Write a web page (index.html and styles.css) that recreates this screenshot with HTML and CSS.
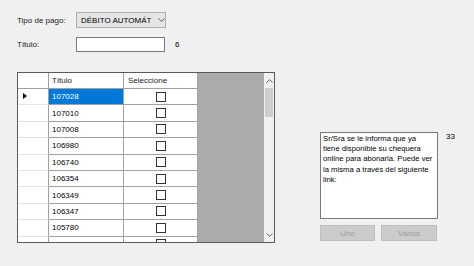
FILE: index.html
```html
<!DOCTYPE html>
<html lang="es">
<head>
<meta charset="utf-8">
<link rel="stylesheet" href="styles.css">
</head>
<body>
<div class="form">
  <div class="row row-tipo">
    <span class="label">Tipo de pago:</span>
    <div class="combo">
      <span class="combo-text">DÉBITO AUTOMÁT</span>
      <svg class="combo-arrow" width="7" height="4" viewBox="0 0 7 4"><path d="M0.5 0.5 L3.5 3.3 L6.5 0.5" fill="none" stroke="#606060" stroke-width="1"/></svg>
    </div>
  </div>
  <div class="row row-titulo">
    <span class="label">Título:</span>
    <div class="textbox"></div>
    <span class="count">6</span>
  </div>
  <div class="main">
    <div class="dgv">
      <div class="dgv-body">
        <div class="dgv-table">
          <div class="dgv-row dgv-header">
            <div class="cell rh"></div>
            <div class="cell c-titulo">Título</div>
            <div class="cell c-sel">Seleccione</div>
          </div>
          <div class="dgv-row">
            <div class="cell rh"><span class="current"></span></div>
            <div class="cell c-titulo selected">107028</div>
            <div class="cell c-sel"><span class="chk"></span></div>
          </div>
          <div class="dgv-row">
            <div class="cell rh"></div>
            <div class="cell c-titulo">107010</div>
            <div class="cell c-sel"><span class="chk"></span></div>
          </div>
          <div class="dgv-row">
            <div class="cell rh"></div>
            <div class="cell c-titulo">107008</div>
            <div class="cell c-sel"><span class="chk"></span></div>
          </div>
          <div class="dgv-row">
            <div class="cell rh"></div>
            <div class="cell c-titulo">106980</div>
            <div class="cell c-sel"><span class="chk"></span></div>
          </div>
          <div class="dgv-row">
            <div class="cell rh"></div>
            <div class="cell c-titulo">106740</div>
            <div class="cell c-sel"><span class="chk"></span></div>
          </div>
          <div class="dgv-row">
            <div class="cell rh"></div>
            <div class="cell c-titulo">106354</div>
            <div class="cell c-sel"><span class="chk"></span></div>
          </div>
          <div class="dgv-row">
            <div class="cell rh"></div>
            <div class="cell c-titulo">106349</div>
            <div class="cell c-sel"><span class="chk"></span></div>
          </div>
          <div class="dgv-row">
            <div class="cell rh"></div>
            <div class="cell c-titulo">106347</div>
            <div class="cell c-sel"><span class="chk"></span></div>
          </div>
          <div class="dgv-row">
            <div class="cell rh"></div>
            <div class="cell c-titulo">105780</div>
            <div class="cell c-sel"><span class="chk"></span></div>
          </div>
          <div class="dgv-row">
            <div class="cell rh"></div>
            <div class="cell c-titulo">105433</div>
            <div class="cell c-sel"><span class="chk"></span></div>
          </div>
        </div>
        <div class="dgv-empty"></div>
      </div>
      <div class="vscroll">
        <svg class="sarrow" width="7" height="4" viewBox="0 0 7 4"><path d="M0.5 3.5 L3.5 0.7 L6.5 3.5" fill="none" stroke="#606060" stroke-width="1"/></svg>
        <div class="track"><div class="thumb"></div></div>
        <svg class="sarrow" width="7" height="4" viewBox="0 0 7 4"><path d="M0.5 0.5 L3.5 3.3 L6.5 0.5" fill="none" stroke="#606060" stroke-width="1"/></svg>
      </div>
    </div>
    <div class="side">
      <div class="side-top">
        <div class="memo">
          <span class="memo-line">Sr/Sra se le informa que ya</span>
          <span class="memo-line">tiene disponible su chequera</span>
          <span class="memo-line">online para abonarla. Puede ver</span>
          <span class="memo-line">la misma a través del siguiente</span>
          <span class="memo-line">link:</span>
        </div>
        <span class="memo-count">33</span>
      </div>
      <div class="buttons">
        <div class="btn btn-uno">Uno</div>
        <div class="btn btn-varios">Varios</div>
      </div>
    </div>
  </div>
</div>
</body>
</html>
```
FILE: styles.css
```css
html, body {
  margin: 0;
  padding: 0;
  background: #f0f0f0;
}
body {
  font-family: "Liberation Sans", Arial, sans-serif;
  font-size: 8px;
  color: #000;
  width: 474px;
  height: 266px;
  overflow: hidden;
}
.form {
  padding: 12px 0 0 17px;
}
.row {
  display: flex;
  align-items: center;
}
.label {
  width: 59px;
  color: #1a1a1a;
}
.row-tipo {
  height: 16px;
}
.combo {
  box-sizing: border-box;
  width: 90px;
  height: 16px;
  background: #e5e5e5;
  border: 1px solid #adadad;
  display: flex;
  align-items: center;
  padding-left: 4px;
}
.combo-text {
  width: 74px;
  white-space: nowrap;
}
.combo-arrow {
  margin-left: 3px;
}
.row-titulo {
  margin-top: 9px;
  height: 15px;
}
.textbox {
  box-sizing: border-box;
  width: 89px;
  height: 15px;
  background: #fff;
  border: 1px solid #7a7a7a;
}
.count {
  margin-left: 10px;
}
.main {
  display: flex;
  align-items: flex-start;
  margin-top: 20px;
}
.dgv {
  display: flex;
  width: 256px;
  height: 169px;
  border: 1px solid #5a5a5a;
  overflow: hidden;
}
.dgv-body {
  display: flex;
  width: 246px;
  height: 169px;
  overflow: hidden;
}
.dgv-table {
  width: 180px;
  background: #fff;
}
.dgv-row {
  display: grid;
  grid-template-columns: 31px 75px 74px;
  height: 16.4px;
}
.dgv-header {
  height: 16px;
}
.cell {
  box-sizing: border-box;
  height: 100%;
  border-right: 1px solid #a0a0a0;
  border-bottom: 1px solid #a0a0a0;
  display: flex;
  align-items: center;
  white-space: nowrap;
  overflow: hidden;
}
.c-titulo {
  padding-left: 3px;
}
.c-sel {
  justify-content: center;
}
.dgv-header .c-sel {
  justify-content: flex-start;
  padding-left: 4px;
}
.rh {
  border-bottom-color: #e3e3e3;
  position: relative;
}
.dgv-header .rh {
  border-bottom-color: #a0a0a0;
}
.dgv-header .cell {
  color: #1a1a1a;
}
.selected {
  background: #0078d7;
  color: #fff;
}
.current {
  position: absolute;
  left: 5px;
  top: 4px;
  width: 0;
  height: 0;
  border-top: 3.5px solid transparent;
  border-bottom: 3.5px solid transparent;
  border-left: 4px solid #000;
}
.chk {
  box-sizing: border-box;
  width: 10px;
  height: 10px;
  border: 1px solid #333;
  background: #fff;
}
.dgv-empty {
  width: 66px;
  height: 169px;
  background: #ababab;
}
.vscroll {
  width: 10px;
  height: 169px;
  background: #f0f0f0;
  display: flex;
  flex-direction: column;
  align-items: center;
}
.sarrow {
  flex: none;
  margin: 6px 0 5px;
}
.track {
  flex: 1;
  width: 100%;
  display: flex;
  flex-direction: column;
  align-items: center;
}
.thumb {
  width: 8px;
  height: 29px;
  background: #cdcdcd;
}
.side {
  margin-left: 45px;
  margin-top: 60px;
  display: flex;
  flex-direction: column;
}
.side-top {
  display: flex;
  align-items: flex-start;
}
.memo {
  box-sizing: border-box;
  width: 118px;
  height: 87px;
  background: #fff;
  border: 1px solid #7a7a7a;
  padding: 1px 2px;
  line-height: 10.2px;
  font-size: 7.7px;
  color: #000;
  display: flex;
  flex-direction: column;
}
.memo-line {
  white-space: nowrap;
}
.memo-count {
  margin-left: 8px;
}
.buttons {
  display: flex;
  gap: 6px;
  margin-top: 6px;
}
.btn {
  box-sizing: border-box;
  width: 55px;
  height: 16px;
  background: #cccccc;
  border: 1px solid #bfbfbf;
  color: #9a9a9a;
  display: flex;
  align-items: center;
  justify-content: center;
}
.btn-varios {
  width: 56px;
}
```
